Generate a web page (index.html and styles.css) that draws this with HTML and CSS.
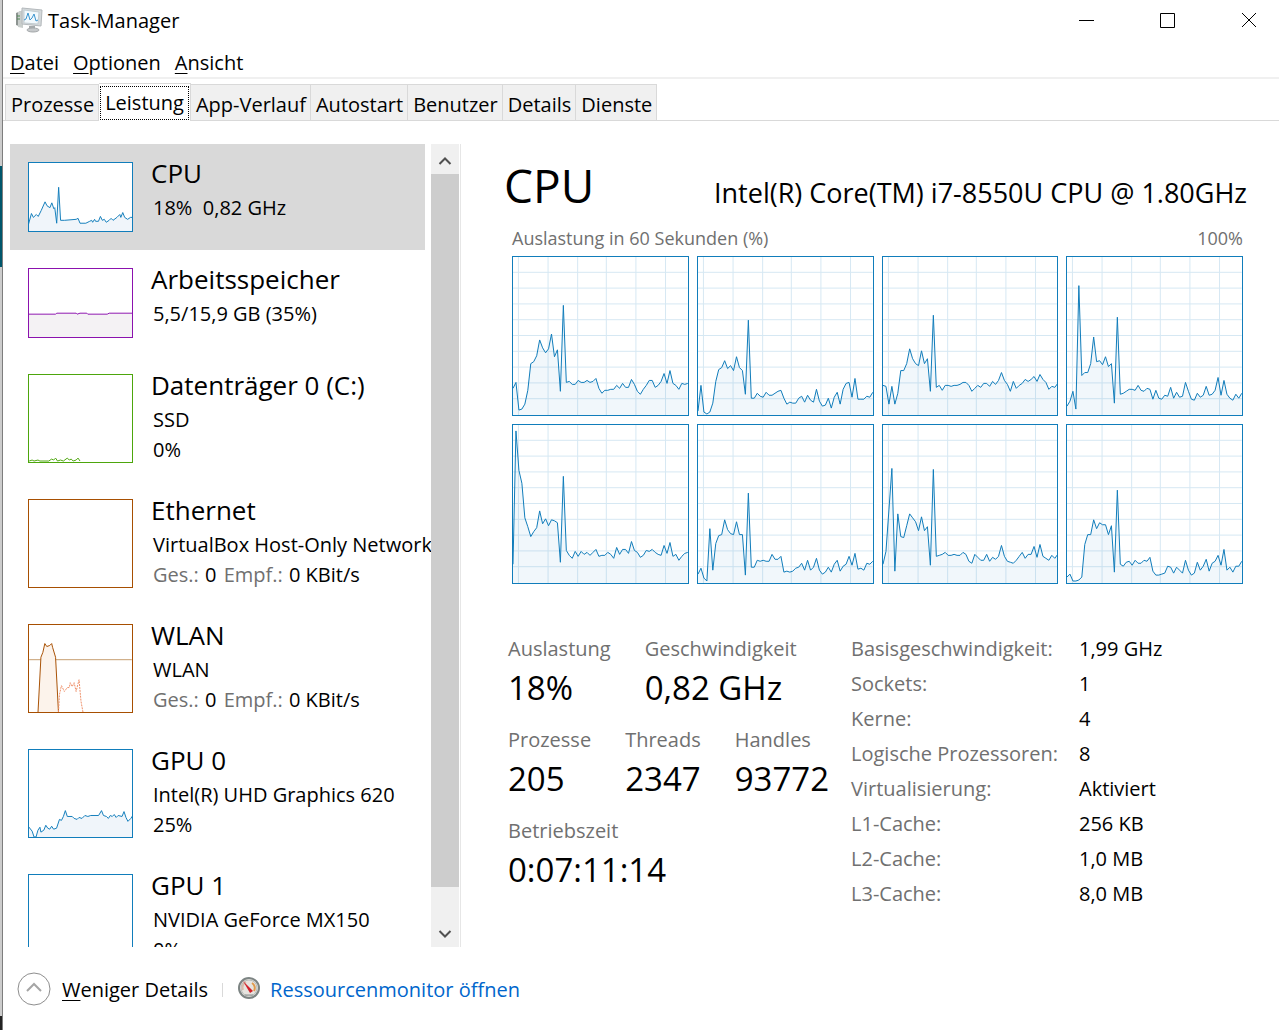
FILE: index.html
```html
<!DOCTYPE html>
<html lang="de">

<head>
    <meta charset="UTF-8">
    <title>Task-Manager</title>
    <link rel="stylesheet" href="styles.css">
</head>

<body>
    <div class="desktop"></div>
    <div class="window">
        <header class="titlebar">
            <svg class="app-icon" width="28" height="26" viewBox="0 0 28 26">
                <path d="M1 6l5-2v16l-5-2z" fill="#8d9491" />
                <path d="M3 5l5-2v18l-5-1z" fill="#c9cecc" />
                <path d="M2 9h3M2 12h3" stroke="#4f8a55" />
                <path d="M14 19h6v4h-6z" fill="#a5a9ab" />
                <path d="M7 1l20 2-1 16-19-2z" fill="#d5d9db" stroke="#b4b9bc" />
                <path d="M9 3l15 2-1 12-14-1z" fill="#f2f9fd" stroke="#c3cdd2" />
                <path d="M9 13l2-1 2-6 2 7 2-2 2-4 2 7 2-1" fill="none" stroke="#3a94cf" />
                <ellipse cx="18" cy="23" rx="6" ry="2" fill="#c6c9cb" stroke="#a5a9ab" />
            </svg>
            <h1 class="window-title">Task-Manager</h1>
            <div class="window-buttons">
                <button class="window-button" aria-label="Minimieren"><svg width="16" height="16"><path d="M0 8.5h15" /></svg></button>
                <button class="window-button" aria-label="Maximieren"><svg width="16" height="16"><path d="M.5 1.500h14v14h-14z" /></svg></button>
                <button class="window-button" aria-label="Schließen"><svg width="16" height="16"><path d="M1 1l14 14M15 1l-14 14" /></svg></button>
            </div>
        </header>

        <nav class="menu">
            <button class="menu-item"><u>D</u>atei</button>
            <button class="menu-item"><u>O</u>ptionen</button>
            <button class="menu-item"><u>A</u>nsicht</button>
        </nav>

        <div class="tabs" role="tablist">
            <button class="tab" role="tab">Prozesse</button>
            <button class="tab active" role="tab" aria-selected="true"><span>Leistung</span></button>
            <button class="tab" role="tab">App-Verlauf</button>
            <button class="tab" role="tab">Autostart</button>
            <button class="tab" role="tab">Benutzer</button>
            <button class="tab" role="tab">Details</button>
            <button class="tab" role="tab">Dienste</button>
        </div>

        <main class="content">
            <div class="sidebar">
                <div class="device-list">
                    <section class="device selected">
                        <svg class="thumb blue" viewBox="0 0 105 70">
                            <path class="area" d="M-1 71V63L2 52l2 4 3-3 2 2 3-6 4-9 2 4 3 2 2-5 2 6 1-1 2 16 2-37 2 34h4l12-1 2-1 2 5h6l4-2 2-1 1 2 2-3 1 2h3l2-5 2 4 2-1 2 3 3-2 2-2 2 2 4-3 3-3 1 3 2-5 2 5 3 2 3-2h5V71z" />
                        </svg>
                        <div class="device-text">
                            <h2>CPU</h2>
                            <p>18%&nbsp; 0,82 GHz</p>
                        </div>
                    </section>
                    <section class="device">
                        <svg class="thumb purple" viewBox="0 0 105 70">
                            <path class="area" d="M-1 72V46.500h28l1-1h20l1 1 3-1h7l1 1h20l2-1h25V72z" />
                        </svg>
                        <div class="device-text">
                            <h2>Arbeitsspeicher</h2>
                            <p>5,5/15,9 GB (35%)</p>
                        </div>
                    </section>
                    <section class="device">
                        <svg class="thumb tall green" viewBox="0 0 105 89">
                            <path d="M0 88l3-1 2 1 4-1 2 1h9l3-2 2 1 2-2 2 3 3-1 3 1 4-3 2 2 2-1 2 2 3-1 2-2 2 3" />
                        </svg>
                        <div class="device-text">
                            <h2>Datenträger 0 (C:)</h2>
                            <p>SSD</p>
                            <p>0%</p>
                        </div>
                    </section>
                    <section class="device">
                        <svg class="thumb tall brown" viewBox="0 0 105 89"></svg>
                        <div class="device-text">
                            <h2>Ethernet</h2>
                            <p>VirtualBox Host-Only Network</p>
                            <p><span class="dim">Ges.:</span> 0 <span class="dim">Empf.:</span> 0 KBit/s</p>
                        </div>
                    </section>
                    <section class="device">
                        <svg class="thumb tall brown" viewBox="0 0 105 89">
                            <path class="limit" d="M0 35.500h105" />
                            <path class="area" d="M9 90l3-57 2-5 2-9 2 3 3-1 2-2 1 4 3 10 3 57z" />
                            <path class="received" d="M30 89l1-18 2-9 3 6 3-4h2l1-5 2 4 2-4 2 9 3-12 2 22 2 11" />
                        </svg>
                        <div class="device-text">
                            <h2>WLAN</h2>
                            <p>WLAN</p>
                            <p><span class="dim">Ges.:</span> 0 <span class="dim">Empf.:</span> 0 KBit/s</p>
                        </div>
                    </section>
                    <section class="device">
                        <svg class="thumb tall blue" viewBox="0 0 105 89">
                            <path class="area" d="M-1 91V78l4 5 2 6h2l2-7 2-3 1 5 3-2 2-5 2 3 2 1 2-3 2 3 3-1 3-9 2 1 2-4 2-6 2 6h5l2 2 3 1 2-2 3 1 3-3 3 1 3-1h8l3-5 2 5 3 1 2 2 2-3 2 1 2-2 2 3 2-2 4 1 2-5 2 6 2 4 3-3 2-3 4 1V91z" />
                        </svg>
                        <div class="device-text">
                            <h2>GPU 0</h2>
                            <p>Intel(R) UHD Graphics 620</p>
                            <p>25%</p>
                        </div>
                    </section>
                    <section class="device">
                        <svg class="thumb tall blue" viewBox="0 0 105 89"></svg>
                        <div class="device-text">
                            <h2>GPU 1</h2>
                            <p>NVIDIA GeForce MX150</p>
                            <p>0%</p>
                        </div>
                    </section>
                </div>
                <div class="scrollbar">
                    <button class="scroll-button" aria-label="Nach oben"><svg width="14" height="10"><path d="M1.500 8L7 2.500 12.500 8" /></svg></button>
                    <div class="scroll-thumb"></div>
                    <button class="scroll-button" aria-label="Nach unten"><svg width="14" height="10"><path d="M1.500 2L7 7.500 12.500 2" /></svg></button>
                </div>
            </div>

            <div class="details">
                <div class="details-head">
                    <h2>CPU</h2>
                    <span>Intel(R) Core(TM) i7-8550U CPU @ 1.80GHz</span>
                </div>
                <div class="chart-caption">
                    <span>Auslastung in 60 Sekunden (%)</span>
                    <span>100%</span>
                </div>
                <div class="charts" id="charts"></div>

                <div class="stats">
                    <div class="live-stats">
                        <div class="stat-row">
                            <div class="stat"><span>Auslastung</span><strong>18%</strong></div>
                            <div class="stat"><span>Geschwindigkeit</span><strong>0,82 GHz</strong></div>
                        </div>
                        <div class="stat-row">
                            <div class="stat"><span>Prozesse</span><strong>205</strong></div>
                            <div class="stat"><span>Threads</span><strong>2347</strong></div>
                            <div class="stat"><span>Handles</span><strong>93772</strong></div>
                        </div>
                        <div class="stat-row">
                            <div class="stat"><span>Betriebszeit</span><strong>0:07:11:14</strong></div>
                        </div>
                    </div>
                    <table class="facts">
                        <tr><th scope="row">Basisgeschwindigkeit:</th><td>1,99 GHz</td></tr>
                        <tr><th scope="row">Sockets:</th><td>1</td></tr>
                        <tr><th scope="row">Kerne:</th><td>4</td></tr>
                        <tr><th scope="row">Logische Prozessoren:</th><td>8</td></tr>
                        <tr><th scope="row">Virtualisierung:</th><td>Aktiviert</td></tr>
                        <tr><th scope="row">L1-Cache:</th><td>256 KB</td></tr>
                        <tr><th scope="row">L2-Cache:</th><td>1,0 MB</td></tr>
                        <tr><th scope="row">L3-Cache:</th><td>8,0 MB</td></tr>
                    </table>
                </div>
            </div>
        </main>

        <footer class="footer">
            <button class="fewer">
                <svg width="34" height="36" viewBox="0 0 34 36">
                    <circle cx="17" cy="17" r="16" fill="none" stroke="#8e8e8e" />
                    <path d="M10 19l7-7 7 7" fill="none" stroke="#a5a5a5" stroke-width="2" />
                </svg>
                <span><u>W</u>eniger Details</span>
            </button>
            <a class="monitor" href="#">
                <svg width="24" height="26" viewBox="0 0 24 26">
                    <circle cx="12" cy="11" r="10" fill="#e7e4df" stroke="#7c8483" stroke-width="2" />
                    <circle cx="12" cy="11" r="8" fill="none" stroke="#b9bdbb" />
                    <path d="M6 13a6 6 0 0 1 3-8" fill="none" stroke="#d8b9a8" stroke-width="2" />
                    <path d="M15 6a6 6 0 0 1 2 8" fill="none" stroke="#e09a4c" stroke-width="2" />
                    <path d="M6 4l10 10-3 2z" fill="#d3202a" />
                    <path d="M8 18h8" stroke="#8a908e" />
                </svg>
                <span>Ressourcenmonitor öffnen</span>
            </a>
        </footer>
    </div>

    <script src="script.js"></script>
</body>

</html>
```

FILE: styles.css
```css
* {
    box-sizing: border-box;
}

body {
    display: flex;
    height: 100vh;
    margin: 0;
    overflow: hidden;
    background-color: #fff;
    color: #000;
    font-family: "Segoe UI", "Open Sans", sans-serif;
    font-size: 20px;
    line-height: 30px;
}

h1,
h2,
p {
    margin: 0;
    font-weight: normal;
}

button {
    border: 0;
    padding: 0;
    background: none;
    color: inherit;
    font: inherit;
}

u {
    text-decoration-thickness: 1px;
    text-underline-offset: 3px;
}

.desktop {
    flex: none;
    width: 3px;
    border-right: 1px solid #7d7d7d;
    background: linear-gradient(#ccc 166px, #00566b 166px, #00566b 267px, #ccc 267px, #ccc 1016px, #222 1016px);
}

.window {
    flex: 1;
    min-width: 0;
    display: flex;
    flex-direction: column;
}

.titlebar {
    display: flex;
    align-items: center;
    height: 40px;
    padding-left: 12px;
}

.app-icon {
    margin-right: 5px;
}

.window-title {
    flex: 1;
    padding-top: 2px;
    font-size: 20px;
}

.window-buttons {
    display: flex;
    margin-right: -10px;
}

.window-button {
    display: flex;
    align-items: center;
    justify-content: center;
    width: 81px;
    height: 40px;
}

.window-button svg {
    fill: none;
    stroke: #000;
}

.menu {
    display: flex;
    gap: 14px;
    height: 39px;
    padding: 8px 7px 0;
    border-bottom: 2px solid #f0f0f0;
}

.tabs {
    display: flex;
    align-items: flex-end;
    height: 42px;
    padding-left: 2px;
    border-bottom: 1px solid #d9d9d9;
}

.tab {
    height: 36px;
    padding: 4px 4px 0 5px;
    border: 1px solid #d9d9d9;
    border-left-width: 0;
    border-bottom: 0;
    background-color: #f0f0f0;
}

.tab:first-child {
    border-left-width: 1px;
}

.tab.active {
    height: 38px;
    margin-bottom: -1px;
    padding: 1px;
    background-color: #fff;
}

.tab.active span {
    display: block;
    height: 34px;
    padding: 1px 4px 0;
    border: 1px dotted #000;
}

.content {
    flex: 1;
    min-height: 0;
    display: flex;
    padding-top: 23px;
}

.sidebar {
    display: flex;
    width: 458px;
    padding: 0 1px 0 7px;
    border-right: 1px solid #e6e6e6;
}

.device-list {
    flex: 1;
    min-width: 0;
    overflow: hidden;
}

.device {
    display: flex;
    gap: 18px;
    margin-right: 6px;
    padding: 18px;
    white-space: nowrap;
}

.device.selected {
    background-color: #d9d9d9;
}

.thumb {
    flex: none;
    width: 105px;
    height: 70px;
    border: 1px solid;
    background-color: #fff;
    fill: none;
    stroke: currentColor;
}

.thumb.tall {
    height: 89px;
}

.thumb .area {
    fill: #f0f5fa;
}

.blue {
    color: #117dbb;
}

.purple {
    color: #8b12ae;
}

.purple .area {
    fill: #f4f2f4;
}

.green {
    color: #4da60c;
}

.brown {
    color: #a74f01;
}

.brown .area {
    fill: #fcf3eb;
}

.brown .limit {
    stroke: #c69c6d;
}

.brown .received {
    stroke: #ee8d66;
    stroke-dasharray: 2 1;
}

.device-text {
    flex: 1;
    min-width: 0;
    height: 70px;
    margin-top: -6px;
}

.tall + .device-text {
    height: 95px;
}

.device-text h2 {
    margin-bottom: 2px;
    font-size: 26px;
    line-height: 35px;
}

.device-text p {
    padding-left: 2px;
}

.dim {
    margin-right: 1px;
    color: #707070;
}

.dim + .dim {
    margin-left: 2px;
}

.scrollbar {
    display: flex;
    flex-direction: column;
    width: 28px;
    background-color: #f0f0f0;
}

.scroll-button {
    height: 30px;
}

.scroll-button svg {
    fill: none;
    stroke: #505050;
    stroke-width: 2;
}

.scroll-thumb {
    flex: 1;
    margin-bottom: 30px;
    background-color: #cdcdcd;
}

.details {
    flex: 1;
    min-width: 0;
    padding: 0 36px 0 51px;
}

.details-head {
    display: flex;
    align-items: baseline;
    justify-content: space-between;
    height: 79px;
    margin: 0 -4px 0 -8px;
    font-size: 27px;
    white-space: nowrap;
}

.details-head h2 {
    font-size: 46px;
    line-height: 82px;
}

.chart-caption {
    display: flex;
    justify-content: space-between;
    height: 33px;
    color: #707070;
    font-size: 18px;
}

.charts {
    display: grid;
    grid-template-columns: repeat(4, 1fr);
    gap: 8px;
}

.chart {
    display: block;
    width: 100%;
    height: 160px;
    border: 1px solid #117dbb;
}

.chart path {
    fill: none;
    stroke: #117dbb;
    vector-effect: non-scaling-stroke;
}

.chart .grid {
    stroke: #d6e8f3;
}

.chart .fill {
    fill: #117dbb;
    fill-opacity: 0.06;
    stroke: none;
}

.stats {
    display: flex;
    margin: 50px 0 0 -4px;
}

.live-stats {
    width: 343px;
}

.stat-row {
    display: flex;
    gap: 34px;
    height: 91px;
}

.stat span {
    display: block;
    color: #707070;
}

.stat strong {
    display: block;
    font-size: 33px;
    font-weight: normal;
    line-height: 48px;
}

.facts {
    border-spacing: 0;
    margin-top: -3px;
    height: 280px;
    white-space: nowrap;
}

.facts th {
    width: 228px;
    padding: 0;
    color: #707070;
    font-weight: normal;
    text-align: left;
}

.facts td {
    padding: 0;
}

.footer {
    display: flex;
    align-items: center;
    height: 83px;
    padding: 2px 0 0 14px;
}

.fewer {
    display: flex;
    align-items: center;
    gap: 11px;
}

.monitor {
    display: flex;
    align-items: center;
    gap: 9px;
    margin-left: 14px;
    padding-left: 15px;
    color: #0066cc;
    text-decoration: none;
    background: linear-gradient(#d9d9d9, #d9d9d9) left center / 1px 14px no-repeat;
}
```

FILE: script.js
```js
// one entry per logical processor, 60 samples each, 160 = full load
const cores = [
    [27, 33, 5, 6, 11, 25, 52, 54, 60, 76, 68, 63, 67, 82, 59, 66, 24, 111, 33, 34, 31, 31, 35, 33, 33, 35, 33, 34, 37, 27, 22, 25, 25, 26, 26, 30, 27, 32, 28, 28, 36, 31, 24, 21, 26, 30, 35, 35, 28, 30, 34, 42, 32, 45, 32, 30, 26, 32, 31, 32],
    [4, 30, 3, 1, 3, 12, 34, 46, 48, 55, 47, 50, 45, 59, 48, 45, 21, 96, 17, 17, 22, 19, 18, 23, 20, 20, 22, 24, 25, 17, 11, 13, 12, 12, 17, 19, 13, 20, 15, 13, 26, 14, 9, 10, 17, 7, 18, 23, 11, 26, 32, 33, 18, 37, 16, 16, 16, 19, 18, 23],
    [30, 29, 11, 29, 11, 22, 45, 45, 52, 67, 57, 52, 50, 65, 52, 57, 24, 101, 28, 30, 25, 30, 30, 29, 30, 30, 31, 33, 33, 30, 24, 27, 30, 28, 32, 32, 29, 34, 31, 35, 43, 35, 31, 24, 34, 27, 30, 32, 36, 34, 36, 39, 34, 41, 36, 33, 26, 29, 28, 32],
    [9, 14, 24, 6, 131, 40, 43, 43, 52, 79, 54, 55, 51, 59, 49, 52, 12, 99, 21, 22, 24, 26, 26, 25, 30, 25, 24, 27, 26, 16, 25, 17, 16, 20, 19, 28, 17, 23, 18, 19, 33, 24, 16, 15, 22, 18, 20, 29, 20, 21, 25, 38, 20, 35, 21, 17, 15, 21, 17, 22],
    [19, 154, 114, 101, 66, 57, 47, 52, 56, 73, 60, 65, 58, 64, 63, 61, 21, 108, 33, 28, 25, 32, 27, 32, 29, 31, 28, 31, 34, 27, 28, 28, 31, 29, 25, 36, 29, 34, 34, 30, 42, 33, 31, 26, 28, 33, 32, 34, 31, 29, 28, 38, 30, 41, 27, 29, 23, 27, 30, 31],
    [9, 15, 5, 2, 55, 13, 40, 48, 49, 64, 54, 50, 49, 62, 49, 49, 8, 91, 16, 16, 23, 22, 23, 22, 22, 29, 24, 24, 27, 11, 12, 11, 12, 15, 16, 20, 13, 23, 13, 16, 25, 13, 9, 11, 16, 11, 19, 23, 12, 17, 19, 27, 18, 30, 14, 15, 13, 20, 19, 22],
    [19, 32, 74, 116, 12, 70, 47, 46, 58, 70, 66, 62, 53, 67, 53, 57, 18, 115, 27, 28, 29, 31, 28, 28, 29, 28, 28, 31, 29, 22, 20, 29, 26, 23, 23, 29, 22, 26, 24, 27, 38, 27, 22, 21, 20, 23, 27, 31, 25, 29, 29, 37, 26, 39, 27, 25, 23, 28, 25, 29],
    [6, 9, 2, 2, 3, 6, 39, 49, 49, 64, 55, 61, 59, 59, 49, 58, 11, 94, 19, 17, 21, 22, 18, 23, 20, 20, 23, 22, 26, 12, 8, 8, 9, 10, 17, 16, 10, 16, 13, 10, 23, 13, 8, 10, 21, 13, 17, 24, 12, 20, 22, 28, 18, 34, 13, 16, 11, 17, 17, 22]
];

const charts = document.getElementById('charts');

// grid lines: every 10% and every 10 seconds
let grid = '';
for (let y = 15.5; y < 158; y += 16) {
    grid += `M0 ${y}H177`;
}
for (let x = 5.5; x < 177; x += 29.8) {
    grid += `M${Math.floor(x) + 0.5} 0V160`;
}

for (const samples of cores) {
    const line = samples.map((load, i) => `${(i * 177 / 59).toFixed(1)} ${160 - load}`).join('L');
    charts.insertAdjacentHTML('beforeend', `
        <svg class="chart" viewBox="0 0 177 160" preserveAspectRatio="none">
            <path class="grid" d="${grid}"/>
            <path class="fill" d="M0 160L${line}V160z"/>
            <path d="M${line}"/>
        </svg>`);
}
```
